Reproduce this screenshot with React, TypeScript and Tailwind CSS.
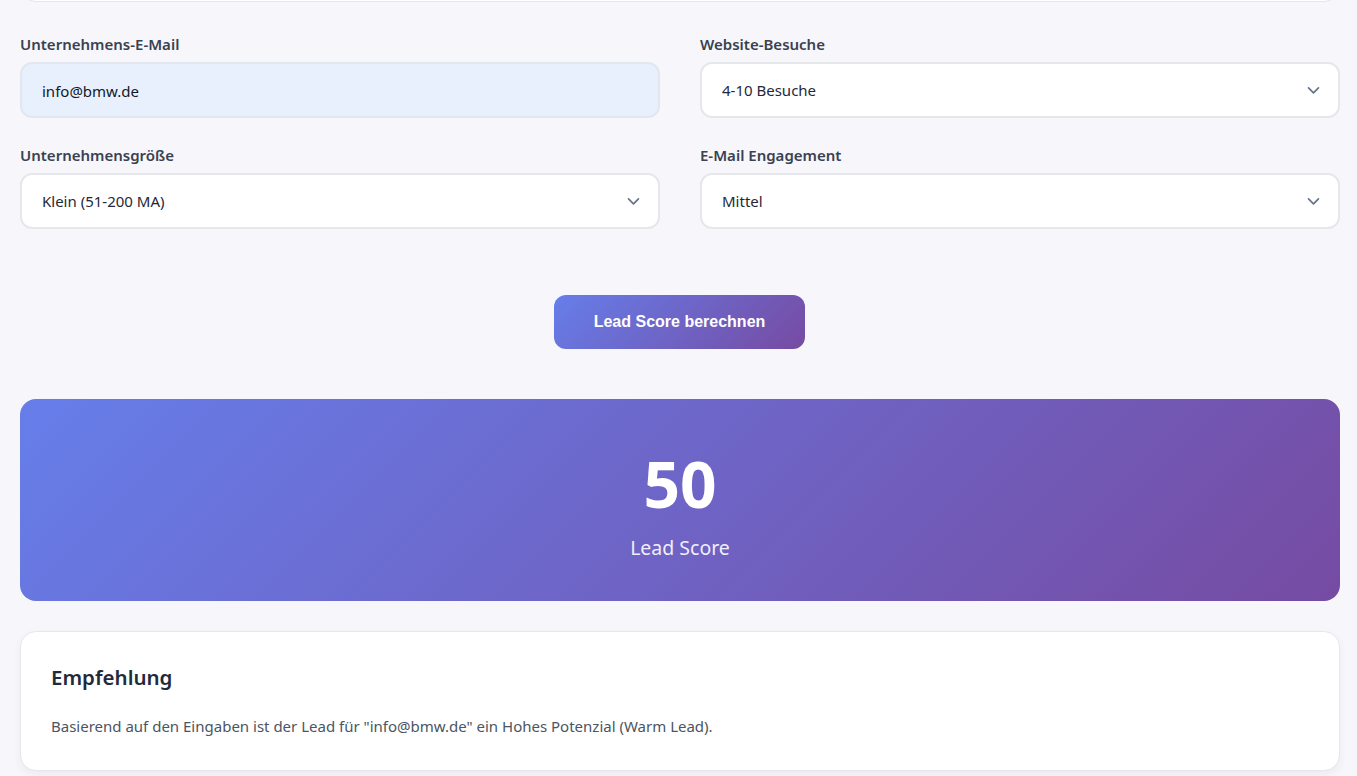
import React from "react";

const font = { fontFamily: '"Noto Sans", "Open Sans", sans-serif' };

function Chevron() {
  return (
    <svg
      width="17"
      height="17"
      viewBox="0 0 24 24"
      fill="none"
      stroke="#64748b"
      strokeWidth="2.4"
      strokeLinecap="round"
      strokeLinejoin="round"
      className="pointer-events-none absolute right-[18px] top-1/2 -translate-y-1/2"
    >
      <polyline points="5 9 12 16 19 9" />
    </svg>
  );
}

function Field({ label, children }: { label: string; children: React.ReactNode }) {
  return (
    <div className="flex flex-col">
      <label className="mb-2 text-[15px] font-semibold leading-[20px] text-[#3a4150]">{label}</label>
      {children}
    </div>
  );
}

function SelectBox({ value }: { value: string }) {
  return (
    <div className="relative">
      <select
        defaultValue={value}
        className="h-[56px] w-full appearance-none rounded-[12px] border-2 border-[#e5e7eb] bg-white px-[20px] text-[15px] text-[#1f2937] outline-none"
        style={font}
      >
        <option>{value}</option>
      </select>
      <Chevron />
    </div>
  );
}

export default function App() {
  return (
    <div className="min-h-[776px] w-full bg-[#f7f7fb] pb-[6px] pl-[20px] pr-[17px] text-[#1f2937]" style={font}>
      <div className="-mt-[40px] h-[42px] rounded-[16px] border border-[#e5e7eb] bg-white" />

      <div className="mt-[32px] grid grid-cols-2 gap-x-[40px] gap-y-[27px]">
        <Field label="Unternehmens-E-Mail">
          <input
            defaultValue="info@bmw.de"
            className="h-[56px] w-full rounded-[12px] border-2 border-[#e2e6ee] bg-[#e8f0fe] px-[20px] pt-[1px] text-[15px] text-[#111827] outline-none"
            style={font}
          />
        </Field>
        <Field label="Website-Besuche">
          <SelectBox value="4-10 Besuche" />
        </Field>
        <Field label="Unternehmensgröße">
          <SelectBox value="Klein (51-200 MA)" />
        </Field>
        <Field label="E-Mail Engagement">
          <SelectBox value="Mittel" />
        </Field>
      </div>

      <div className="mt-[66px] flex justify-center pr-[1px]">
        <button
          className="h-[54px] w-[251px] rounded-[12px] bg-[linear-gradient(135deg,#667eea_0%,#764ba2_100%)] text-[16px] font-bold text-white"
          style={{ fontFamily: '"Liberation Sans", Arial, sans-serif' }}
        >
          Lead Score berechnen
        </button>
      </div>

      <div className="mt-[50px] flex h-[202px] flex-col items-center rounded-[16px] bg-[linear-gradient(135deg,#667eea_0%,#764ba2_100%)] pt-[47px] text-white">
        <div className="text-[64px] font-bold leading-[76px]">50</div>
        <div className="mt-[12px] text-[19.5px] leading-[28px] opacity-90">Lead Score</div>
      </div>

      <div className="mt-[30px] rounded-[16px] border border-[#e5e7eb] bg-white px-[30px] pb-[32px] pt-[30px] shadow-[0_4px_10px_rgba(0,0,0,0.05)]">
        <h3 className="text-[20.5px] font-semibold leading-[30px] text-[#1f2a3c]">Empfehlung</h3>
        <p className="mt-[22px] text-[15px] leading-[24px] text-[#4b5563]">
          Basierend auf den Eingaben ist der Lead für "info@bmw.de" ein Hohes Potenzial (Warm Lead).
        </p>
      </div>
    </div>
  );
}
